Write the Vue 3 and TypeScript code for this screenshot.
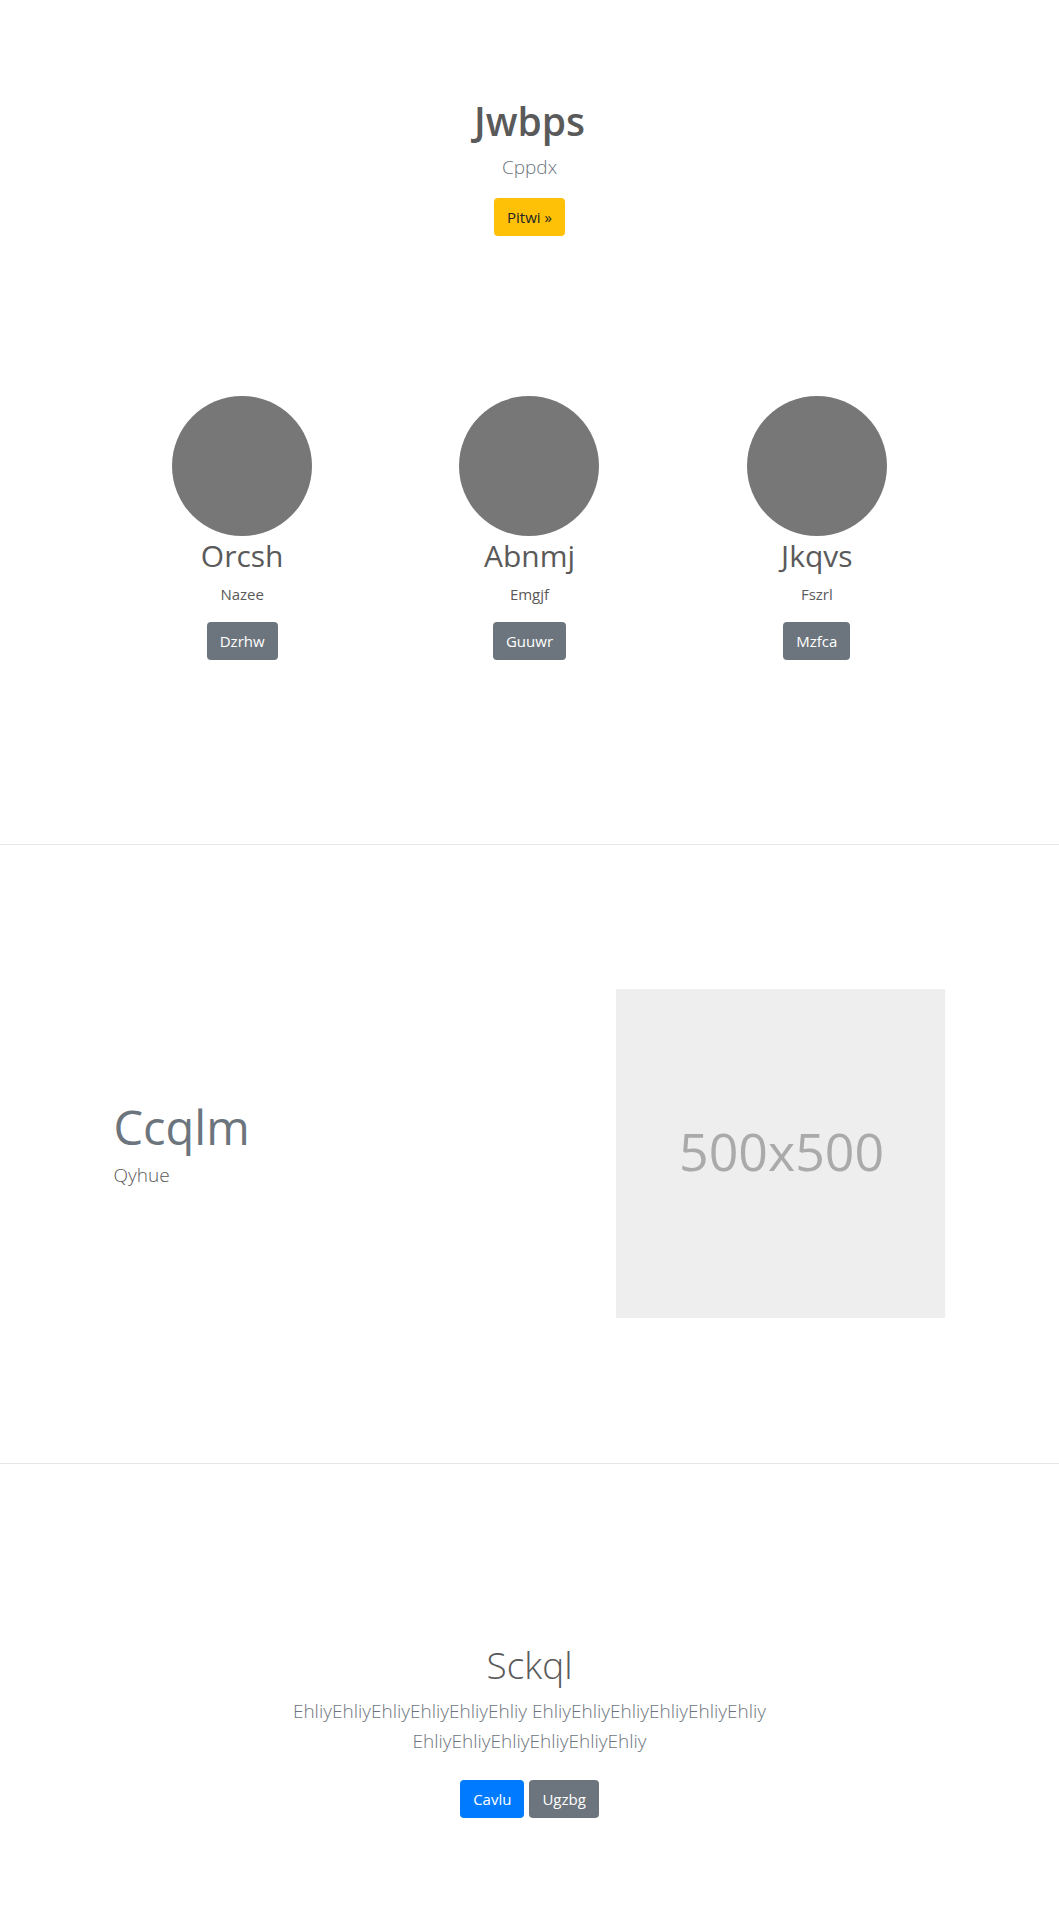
<script setup lang="ts">
interface Feature {
  title: string
  text: string
  action: string
}

const features: Feature[] = [
  { title: 'Orcsh', text: 'Nazee', action: 'Dzrhw' },
  { title: 'Abnmj', text: 'Emgjf', action: 'Guuwr' },
  { title: 'Jkqvs', text: 'Fszrl', action: 'Mzfca' },
]

const summary: string[] = ['Ehliy'.repeat(6), 'Ehliy'.repeat(6), 'Ehliy'.repeat(6)]
</script>

<template>
  <main class="page">
    <header class="hero">
      <h1 class="title title-strong">Jwbps</h1>
      <p class="lead muted">Cppdx</p>
      <a class="btn btn-warning" href="#features">Pitwi »</a>
    </header>

    <section id="features" class="container features">
      <article v-for="feature in features" :key="feature.title" class="feature">
        <svg class="avatar" viewBox="0 0 140 140" aria-hidden="true">
          <circle cx="70" cy="70" r="70" fill="#777" />
        </svg>
        <h2 class="feature-title">{{ feature.title }}</h2>
        <p class="feature-text">{{ feature.text }}</p>
        <a class="btn btn-secondary" href="#">{{ feature.action }}</a>
      </article>
    </section>

    <hr class="divider" />

    <section class="container showcase">
      <div class="showcase-copy">
        <h2 class="showcase-title">Ccqlm</h2>
        <p class="lead">Qyhue</p>
      </div>
      <div class="showcase-media">
        <svg class="placeholder" viewBox="0 0 330 330" role="img" aria-label="500x500">
          <rect width="330" height="330" fill="#eee" />
          <text x="166" y="182" text-anchor="middle" fill="#aaa">500x500</text>
        </svg>
      </div>
    </section>

    <hr class="divider" />

    <section class="closing">
      <h2 class="title title-light">Sckql</h2>
      <p class="lead muted">{{ summary.join(' ') }}</p>
      <div class="actions">
        <a class="btn btn-primary" href="#">Cavlu</a>
        <a class="btn btn-secondary" href="#">Ugzbg</a>
      </div>
    </section>
  </main>
</template>

<style>
body {
  margin: 0;
  background: #fff;
}
</style>

<style scoped>
.page {
  color: #5a5a5a;
  font-family: 'Segoe UI', 'Open Sans', 'Noto Sans', sans-serif;
  font-size: 15px;
  line-height: 24px;
}

.page *,
.page *::before {
  box-sizing: border-box;
}

h1,
h2,
p {
  margin: 0;
}

.container {
  max-width: 862px;
  margin: 0 auto;
}

.hero {
  padding: 96px 16px;
  text-align: center;
}

.title {
  margin-bottom: 6px;
  line-height: 50px;
}

.title-strong {
  font-size: 39px;
  font-weight: 600;
}

.title-light {
  font-size: 37px;
  font-weight: 300;
}

.lead {
  margin-bottom: 16px;
  font-size: 19px;
  font-weight: 300;
  line-height: 30px;
}

.muted {
  color: #6c757d;
}

.btn {
  display: inline-block;
  padding: 6px 12px;
  border: 1px solid transparent;
  border-radius: 4px;
  color: #fff;
  line-height: 24px;
  text-align: center;
  text-decoration: none;
  vertical-align: top;
}

.btn-warning {
  background: #ffc107;
  color: #212529;
}

.btn-secondary {
  background: #6c757d;
}

.btn-primary {
  background: #007bff;
}

.features {
  display: flex;
  padding: 64px 0 184px;
}

.feature {
  flex: 1;
  padding: 0 15px;
  text-align: center;
}

.avatar {
  display: block;
  width: 140px;
  height: 140px;
  margin: 0 auto;
}

.feature-title {
  margin-bottom: 6px;
  font-size: 30px;
  font-weight: 400;
  line-height: 40px;
}

.feature-text {
  margin-bottom: 16px;
}

.divider {
  height: 1px;
  margin: 0;
  border: 0;
  background: #e6e6e6;
}

.showcase {
  display: grid;
  grid-template-columns: 7fr 5fr;
  align-items: center;
  padding: 144px 0 145px;
}

.showcase-copy,
.showcase-media {
  padding: 0 15px;
}

.showcase-title {
  margin-bottom: 8px;
  color: #6c757d;
  font-size: 47px;
  font-weight: 400;
  line-height: 50px;
}

.placeholder {
  display: block;
  width: 100%;
}

.placeholder text {
  font-size: 52px;
}

.closing {
  max-width: 560px;
  margin: 0 auto;
  padding: 176px 16px 96px;
  text-align: center;
}

.actions {
  display: flex;
  justify-content: center;
  gap: 5px;
  padding-top: 8px;
}
</style>
